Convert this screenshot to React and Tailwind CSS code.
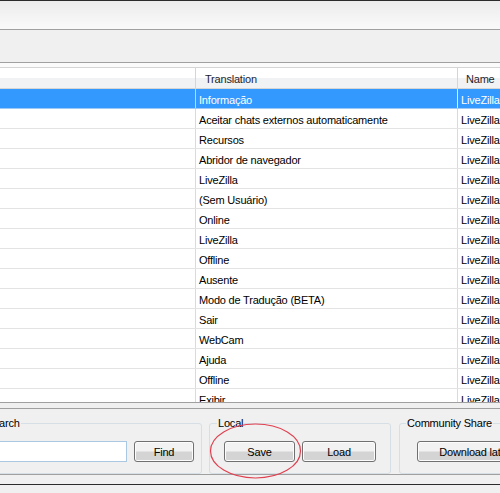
import React from 'react';

const rows = [
    'Informação',
    'Aceitar chats externos automaticamente',
    'Recursos',
    'Abridor de navegador',
    'LiveZilla',
    '(Sem Usuário)',
    'Online',
    'LiveZilla',
    'Offline',
    'Ausente',
    'Modo de Tradução (BETA)',
    'Sair',
    'WebCam',
    'Ajuda',
    'Offline',
    'Exibir',
];

function WinButton({ children, className = '' }) {
    return (
        <button
            type="button"
            className={
                'h-[21px] rounded-[3px] border border-[#707070] bg-linear-to-b from-[#f2f2f2] from-45% to-[#d4d4d4] to-55% text-[#000] shadow-[inset_0_0_0_1px_#fcfcfc] flex items-center justify-center whitespace-nowrap overflow-hidden pt-px ' +
                className
            }
        >
            {children}
        </button>
    );
}

export default function App() {
    return (
        <div
            className="relative w-[500px] h-[493px] overflow-hidden bg-[#f0f0f0] text-[11px] tracking-[-0.2px] text-black flex flex-col"
            style={{ fontFamily: '"Liberation Sans", Arial, sans-serif' }}
        >
            {/* window top edge */}
            <div className="h-px bg-[#2b2b2b]" />
            {/* toolbars */}
            <div className="h-[28px] bg-linear-to-b from-[#ececec] to-[#fafafa] border-b border-[#a0a0a0] box-content" />
            <div className="h-[32px] bg-[#f0f0f0] border-b border-[#a0a0a0] box-content" />
            <div className="h-[4px] bg-[#fbfbfb] border-b border-[#d5d5d5] box-content" />

            {/* list header */}
            <div className="flex h-[20px] bg-linear-to-b from-white from-50% to-[#f1f2f4] to-50% border-b border-[#d5d5d5] box-content text-[#1e1e2e]">
                <div className="w-[196px] shrink-0 border-r border-[#d5d5d5]" />
                <div className="w-[262px] shrink-0 border-r border-[#d5d5d5] pl-[9px] pt-[3px] flex items-center">Translation</div>
                <div className="flex-1 pl-[8px] pt-[3px] flex items-center">Name</div>
            </div>

            {/* list rows */}
            <div className="h-[313px] bg-white overflow-hidden">
                {rows.map((text, i) => {
                    const selected = i === 0;
                    return (
                        <div
                            key={i}
                            className={
                                selected
                                    ? 'flex h-[20px] bg-[#3399ff] text-white border-b border-[#9cc9f5]'
                                    : 'flex h-[20px] border-b border-[#e3e3e3]'
                            }
                        >
                            <div className={selected ? 'w-[196px] shrink-0 border-r border-[#b5d8fb]' : 'w-[196px] shrink-0 border-r border-[#dadada]'} />
                            <div className={selected ? 'w-[262px] shrink-0 border-r border-[#d8ebff] pl-[3px] pt-[3px] flex items-center' : 'w-[262px] shrink-0 border-r border-[#dadada] pl-[3px] pt-[3px] flex items-center'}>
                                {text}
                            </div>
                            <div className="flex-1 pl-[3px] pt-[3px] flex items-center whitespace-nowrap">LiveZilla</div>
                        </div>
                    );
                })}
            </div>
            <div className="h-px bg-[#a0a0a0]" />

            {/* bottom panel */}
            <div className="h-[5px]" />
            <div className="h-px bg-[#a0a0a0]" />
            <div className="flex items-start pt-[8px] h-[65px]">
                <fieldset className="ml-[-40px] w-[242px] shrink-0 border border-[#d5dfe5] rounded-[3px] px-0 pb-[11px]">
                    <legend className="ml-[24px] px-[1px] leading-[13px]">Search</legend>
                    <div className="flex items-center pt-[11px]">
                        <div className="ml-[18px] w-[148px] h-[21px] bg-white border border-[#abc8e2]" />
                        <WinButton className="ml-[7px] w-[60px]">Find</WinButton>
                    </div>
                </fieldset>
                <fieldset className="ml-[7px] w-[182px] shrink-0 border border-[#d5dfe5] rounded-[3px] px-0 pb-[11px]">
                    <legend className="ml-[7px] px-[1px] leading-[13px]">Local</legend>
                    <div className="flex items-center pt-[11px]">
                        <WinButton className="ml-[14px] w-[71px]">Save</WinButton>
                        <WinButton className="ml-[7px] w-[74px]">Load</WinButton>
                    </div>
                </fieldset>
                <fieldset className="ml-[8px] w-[160px] shrink-0 border border-[#d5dfe5] rounded-[3px] px-0 pb-[11px]">
                    <legend className="ml-[6px] px-[1px] leading-[13px] whitespace-nowrap">Community Share</legend>
                    <div className="flex items-center pt-[11px]">
                        <WinButton className="ml-[17px] w-[120px]">Download latest</WinButton>
                    </div>
                </fieldset>
            </div>
            <div className="h-px bg-[#a0a0a0]" />
            <div className="h-[9px]" />
            <div className="h-px bg-[#2b2b2b]" />

            {/* red highlight around Save */}
            <svg className="absolute left-0 top-0 pointer-events-none" width="500" height="493">
                <ellipse cx="255.5" cy="451" rx="45" ry="27" fill="none" stroke="#e0404f" strokeWidth="1.2" />
            </svg>
        </div>
    );
}
